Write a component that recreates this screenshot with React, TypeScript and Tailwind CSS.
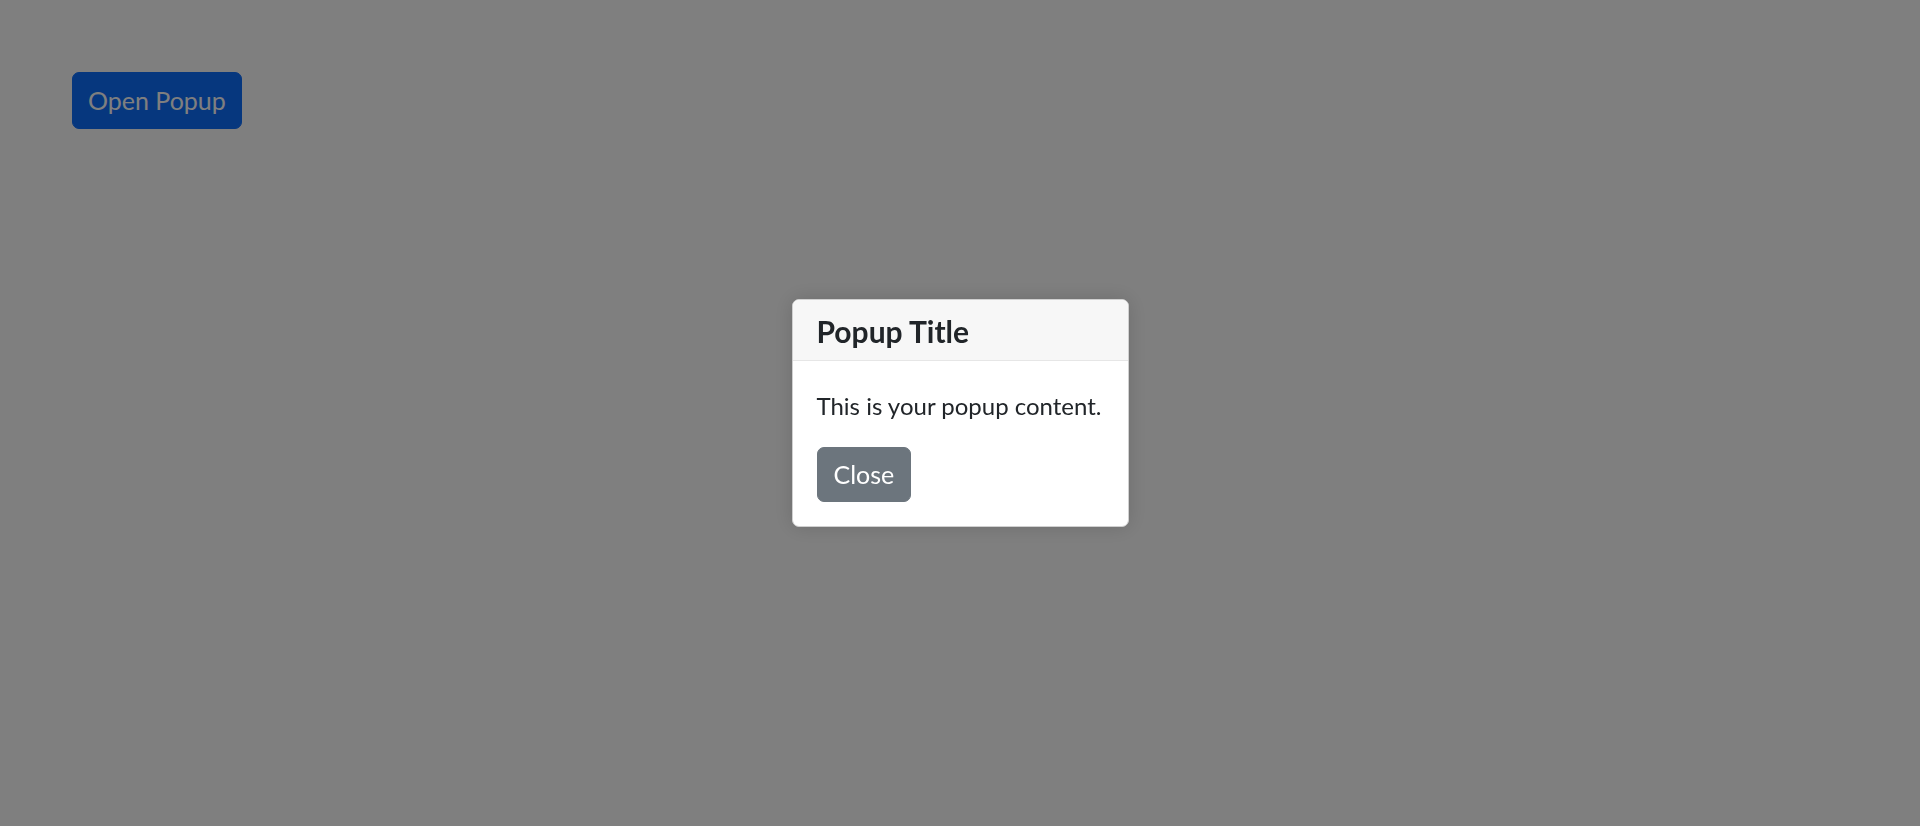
import React, { useState } from 'react';

const font = { fontFamily: 'Lato, "Segoe UI", "Noto Sans", sans-serif' };

export default function App() {
  const [open, setOpen] = useState(true);

  return (
    <div className="min-h-screen bg-white text-[#212529]" style={font}>
      <div className="p-[72px]">
        <button
          onClick={() => setOpen(true)}
          className="rounded-[7px] border border-[#0d6efd] bg-[#0d6efd] px-[15px] py-[8px] text-[25px] leading-[39px] text-white"
        >
          Open Popup
        </button>
      </div>

      {open && (
        <div className="fixed inset-0 flex items-center justify-center bg-black/50">
          <div className="w-[337px] overflow-hidden rounded-[7px] border border-[#d0d0d0] bg-white shadow-[0_0_20px_rgba(0,0,0,0.15)]">
            <div className="border-b border-[#e6e6e6] bg-[#f7f7f7] px-[24px] pt-[13px] pb-[10px]">
              <h2 className="whitespace-nowrap text-[30px] font-bold leading-[37px]">Popup Title</h2>
            </div>
            <div className="px-[24px] pt-[26px] pb-[24px]">
              <p className="whitespace-nowrap text-[24px] leading-[38px]">This is your popup content.</p>
              <button
                onClick={() => setOpen(false)}
                className="mt-[22px] rounded-[7px] border border-[#6c757d] bg-[#6c757d] px-[16px] py-[7px] text-[25px] leading-[39px] text-white"
              >
                Close
              </button>
            </div>
          </div>
        </div>
      )}
    </div>
  );
}
